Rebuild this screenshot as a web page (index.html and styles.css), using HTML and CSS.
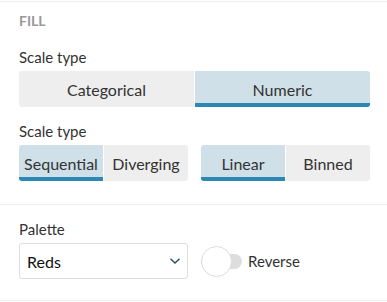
FILE: index.html
```html
<!DOCTYPE html>
<html lang="en">
<head>
    <meta charset="UTF-8">
    <title>Fill settings</title>
    <link rel="stylesheet" href="styles.css">
</head>
<body>
    <div class="panel">
        <!-- Fill section -->
        <div class="section">
            <div class="heading">FILL</div>

            <div class="label">Scale type</div>
            <div class="group">
                <div class="btn">Categorical</div>
                <div class="btn active">Numeric</div>
            </div>

            <div class="label">Scale type</div>
            <div class="pair">
                <div class="group">
                    <div class="btn active">Sequential</div>
                    <div class="btn">Diverging</div>
                </div>
                <div class="group">
                    <div class="btn active">Linear</div>
                    <div class="btn">Binned</div>
                </div>
            </div>
        </div>

        <!-- Palette section -->
        <div class="section palette">
            <div class="label">Palette</div>
            <div class="pair">
                <div class="select">
                    <span>Reds</span>
                    <svg width="12" height="8" viewBox="0 0 12 8">
                        <path d="M1.5 1.8 L6 6 L10.5 1.8" fill="none" stroke="#2c4a6b" stroke-width="1.4"/>
                    </svg>
                </div>
                <div class="toggle">
                    <div class="track"><div class="knob"></div></div>
                    <span>Reverse</span>
                </div>
            </div>
        </div>
    </div>
</body>
</html>
```

FILE: styles.css
```css
body {
    margin: 0;
    padding: 0;
    background: #ffffff;
    font-family: 'Lato', sans-serif;
    color: #333333;
}
.panel {
    margin-top: 1px;
    border-top: 1px solid #eeeeee;
}
.section {
    padding: 10px 17px 23px 19px;
    border-bottom: 1px solid #eeeeee;
}
.heading {
    font-size: 14px;
    font-weight: bold;
    color: #999999;
    line-height: 17px;
    margin-bottom: 18px;
}
.label {
    font-size: 15px;
    line-height: 20px;
    margin-bottom: 4px;
}
.group {
    display: flex;
    gap: 1px;
    border-radius: 3px;
    overflow: hidden;
    margin-bottom: 14px;
}
.btn {
    flex: 1;
    background-color: #eeeeee;
    height: 36px;
    box-sizing: border-box;
    display: flex;
    align-items: center;
    justify-content: center;
    font-size: 16px;
}
.btn.active {
    background-color: #cfe0e8;
    border-bottom: 4px solid #2b88b5;
    padding-top: 4px;
}
.pair {
    display: grid;
    grid-template-columns: 1fr 1fr;
    gap: 13px;
}
.pair .group {
    margin-bottom: 0;
}
.palette {
    padding-top: 14px;
    padding-bottom: 21px;
}
.select {
    height: 36px;
    box-sizing: border-box;
    border: 1px solid #dddddd;
    border-radius: 3px;
    display: flex;
    align-items: center;
    justify-content: space-between;
    padding: 0 6px 0 7px;
    font-size: 16px;
    color: #111111;
}
.toggle {
    display: flex;
    align-items: center;
    gap: 6px;
    font-size: 15px;
}
.track {
    position: relative;
    width: 41px;
    height: 15px;
    background-color: #dddddd;
    border-radius: 8px;
}
.knob {
    position: absolute;
    left: 0;
    top: -8px;
    width: 29px;
    height: 29px;
    border: 1px solid #dddddd;
    border-radius: 50%;
    background-color: #ffffff;
}
```
